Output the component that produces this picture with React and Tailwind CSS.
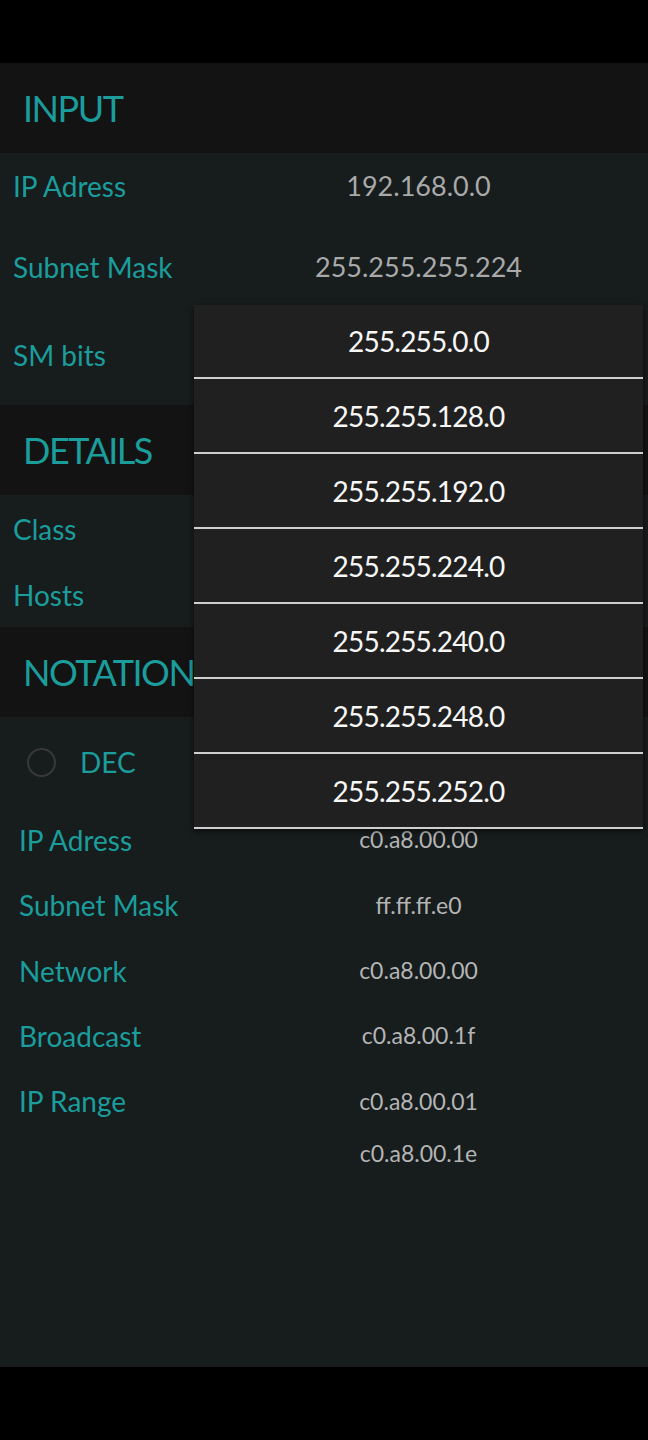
import React from 'react';

const teal = 'text-[#1b9d9c]';

const Header = ({ title }) => (
  <div className="h-[90px] bg-[#131313] flex items-center pl-[23px]">
    <span className={`text-[36px] leading-none tracking-[-1.5px] ${teal}`}>{title}</span>
  </div>
);

const InputRow = ({ label, value, className = '' }) => (
  <div className={`flex items-center ${className}`}>
    <div className={`w-[194px] pl-[13px] text-[28px] ${teal}`}>{label}</div>
    <div className="w-[449px] text-center text-[27px] text-[#a9a9a9]">{value}</div>
  </div>
);

const NotationRow = ({ label, value, className = '' }) => (
  <div className={`flex items-center ${className}`}>
    <div className={`w-[194px] pl-[19px] text-[28px] ${teal}`}>{label}</div>
    <div className="w-[449px] text-center text-[23px] text-[#b4b4b4]">{value}</div>
  </div>
);

const masks = [
  '255.255.0.0',
  '255.255.128.0',
  '255.255.192.0',
  '255.255.224.0',
  '255.255.240.0',
  '255.255.248.0',
  '255.255.252.0',
];

export default function App() {
  return (
    <div className="w-[648px] h-[1440px] bg-black flex flex-col font-['Lato',sans-serif]">
      <div className="h-[63px]" />
      <div className="relative h-[1304px] bg-[#171c1d] flex flex-col">
        <Header title="INPUT" />
        <InputRow label="IP Adress" value="192.168.0.0" className="h-[66px]" />
        <InputRow label="Subnet Mask" value="255.255.255.224" className="h-[96px]" />
        <InputRow label="SM bits" value="" className="h-[90px] pb-[10px]" />

        <Header title="DETAILS" />
        <InputRow label="Class" value="" className="h-[67px]" />
        <InputRow label="Hosts" value="" className="h-[65px]" />

        <Header title="NOTATIONS" />
        <div className="h-[90px] flex items-center pl-[27px] gap-[24px]">
          <div className="w-[29px] h-[29px] rounded-full border-[2.5px] border-[#383838]" />
          <span className={`text-[28px] ${teal}`}>DEC</span>
        </div>
        <NotationRow label="IP Adress" value="c0.a8.00.00" className="h-[65px]" />
        <NotationRow label="Subnet Mask" value="ff.ff.ff.e0" className="h-[66px]" />
        <NotationRow label="Network" value="c0.a8.00.00" className="h-[65px]" />
        <NotationRow label="Broadcast" value="c0.a8.00.1f" className="h-[65px]" />
        <NotationRow label="IP Range" value="c0.a8.00.01" className="h-[66px]" />
        <NotationRow label="" value="c0.a8.00.1e" className="h-[38px]" />

        {/* open spinner list */}
        <div className="absolute left-[194px] top-[242px] w-[449px] bg-[#202020] shadow-[0_2px_6px_rgba(0,0,0,0.6)] flex flex-col">
          {masks.map((m, i) => (
            <div
              key={m}
              className={`${i === 0 ? 'h-[74px]' : 'h-[75px]'} flex items-center justify-center border-b-2 border-[#cfcfcf] text-[28px] tracking-[-0.8px] text-[#f7f7f7]`}
            >
              {m}
            </div>
          ))}
        </div>
      </div>
      <div className="flex-1 bg-black" />
    </div>
  );
}
